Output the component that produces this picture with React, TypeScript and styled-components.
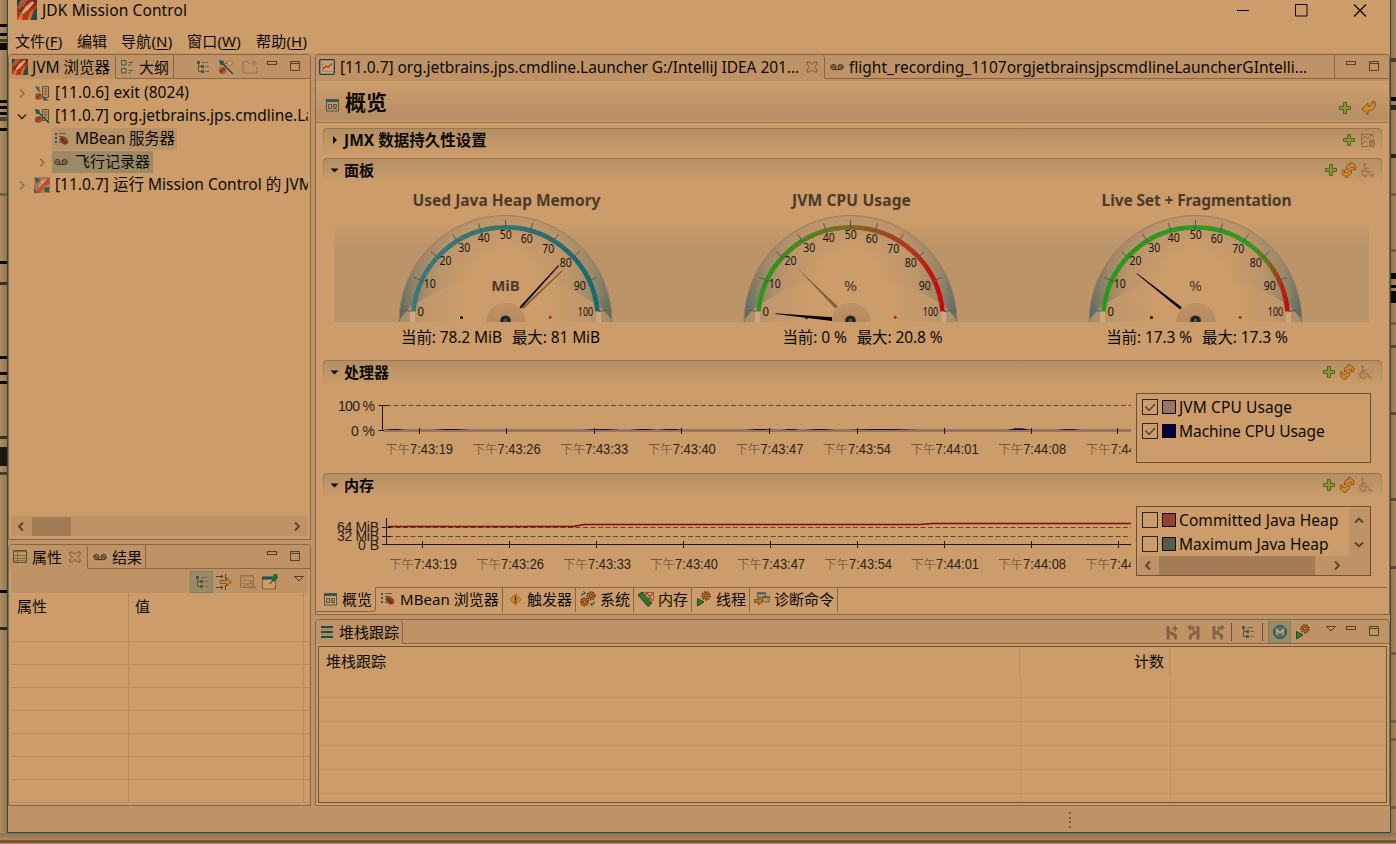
import React from 'react';
import styled, { createGlobalStyle, css } from 'styled-components';

const C = {
  light: '#cc9c6a',
  dark: '#c09366',
  line: '#876545',
  ink: '#0b0a08',
  mid: '#6a5138',
  grid: '#b78c60',
  teal: '#1d5050',
  header: '#b68f65',
  thumb: '#a37c55',
};

const GlobalStyle = createGlobalStyle`
  * { box-sizing: border-box; }
  html, body { margin: 0; padding: 0; overflow: hidden; }
  body {
    font-family: "Noto Sans", "Noto Sans CJK SC", sans-serif;
    font-size: 15px;
    line-height: 20px;
    color: ${C.ink};
    background: #ae8960;
  }
  svg { display: block; flex: none; }
`;

/* ---------- desktop ---------- */

const Desktop = styled.div`
  width: 1396px;
  height: 844px;
  display: flex;
  overflow: hidden;
  background: linear-gradient(180deg, #b08b61 0 833px, #8d6f4d 833px, #a98459 839px, #a98459 840px, #70563c 840px 843px, #b98e60 843px);
`;

const Sliver = styled.div<{ $w: number }>`
  width: ${p => p.$w}px;
  height: 833px;
  flex: none;
`;

const Window = styled.div`
  width: 1384px;
  height: 833px;
  flex: none;
  display: flex;
  flex-direction: column;
  border: 1px solid ${C.teal};
  border-top: 0;
  background: ${C.dark};
`;

const TitleBar = styled.div`
  height: 20px;
  display: flex;
  align-items: center;
  background: ${C.light};
  padding-left: 9px;
  gap: 5px;
`;

const WindowButtons = styled.div`
  margin-left: auto;
  display: flex;
  align-items: center;
  gap: 45px;
  padding-right: 22px;
`;

const Text = styled.span<{ $ls?: number }>`
  white-space: nowrap;
  letter-spacing: ${p => p.$ls ?? 0}px;
`;

const Latin = styled(Text)`
  font-size: 15.5px;
`;

const MenuBar = styled.div`
  height: 33px;
  padding: 9px 0 0 7px;
  display: flex;
  align-items: center;
  background: ${C.light};
`;

const MenuItem = styled.span<{ $w: number; $ls?: number }>`
  width: ${p => p.$w}px;
  white-space: nowrap;
  letter-spacing: ${p => p.$ls ?? 0.1}px;
  u { text-underline-offset: 2px; }
`;

const Workbench = styled.div`
  flex: 1;
  display: flex;
  gap: 4px;
  padding-top: 1px;
  background: ${C.dark};
`;

const Column = styled.div<{ $w: number }>`
  width: ${p => p.$w}px;
  display: flex;
  flex-direction: column;
  gap: 4px;
`;

const Pane = styled.section<{ $h: number; $fill?: string }>`
  height: ${p => p.$h}px;
  display: flex;
  flex-direction: column;
  border: 1px solid ${C.line};
  border-radius: 4px 4px 0 0;
  background: ${p => p.$fill ?? C.light};
  overflow: hidden;
`;

const TabRow = styled.div`
  height: 24px;
  flex: none;
  display: flex;
  background: ${C.dark};
`;

const Tab = styled.div<{ $w: number; $active?: boolean; $pl?: number; $gap?: number }>`
  width: ${p => p.$w}px;
  display: flex;
  align-items: center;
  gap: ${p => p.$gap ?? 5}px;
  padding-left: ${p => p.$pl ?? 4}px;
  border-right: 1px solid ${C.line};
  border-bottom: 1px solid ${p => (p.$active ? 'transparent' : C.line)};
  ${p => p.$active && css`border-top-right-radius: 4px;`}
`;

const TabTools = styled.div<{ $pr?: number }>`
  flex: 1;
  display: flex;
  justify-content: flex-end;
  align-items: center;
  padding-right: ${p => p.$pr ?? 9}px;
  border-bottom: 1px solid ${C.line};
`;

const Slot = styled.span<{ $ml?: number; $up?: number }>`
  display: flex;
  margin-left: ${p => p.$ml ?? 0}px;
  margin-bottom: ${p => p.$up ?? 0}px;
`;

/* ---------- tree ---------- */

const Tree = styled.div`
  flex: 1;
  padding: 2px 2px 0 0;
  overflow: hidden;
`;

const TreeRow = styled.div<{ $depth?: number }>`
  height: 23px;
  display: flex;
  align-items: center;
  padding-left: ${p => 8 + (p.$depth ?? 0) * 20}px;
  overflow: hidden;
`;

const Twisty = styled.span`
  width: 10px;
  height: 10px;
  flex: none;
`;

const TreeLabel = styled.span<{ $bg?: string; $w?: number }>`
  height: 22px;
  flex: none;
  display: flex;
  align-items: center;
  gap: 5px;
  margin-left: 5px;
  padding-left: 2px;
  width: ${p => (p.$w ? p.$w + 'px' : 'auto')};
  background: ${p => p.$bg ?? 'transparent'};
  ${Text} { padding-bottom: 2px; }
`;

const HScroll = styled.div`
  height: 20px;
  margin: 0 2px 3px;
  display: flex;
  align-items: center;
  background: ${C.dark};
`;

const Thumb = styled.div<{ $w: number; $h: number }>`
  width: ${p => p.$w}px;
  height: ${p => p.$h}px;
  background: ${C.thumb};
`;

const Push = styled.span`
  margin-left: auto;
`;

/* ---------- property table ---------- */

const PropTools = styled.div`
  height: 24px;
  margin: 0 2px;
  padding: 2px 4px 0 0;
  display: flex;
  align-items: center;
  justify-content: flex-end;
  background: ${C.dark};
`;

const ToggleButton = styled.span`
  width: 23px;
  height: 22px;
  display: flex;
  align-items: center;
  justify-content: center;
  background: #9b8a66;
  border: 1px solid #728671;
`;

const PropTable = styled.div`
  margin: 0 2px;
  display: grid;
  grid-template-columns: 118px 175px 4px;
  grid-template-rows: 26px repeat(8, 23px);
`;

const PropCell = styled.div<{ $head?: boolean; $last?: boolean }>`
  border-right: ${p => (p.$last ? 0 : 1)}px solid ${C.grid};
  border-bottom: ${p => (p.$head ? 0 : 1)}px solid ${C.grid};
  padding: 3px 0 0 6px;
`;

/* ---------- editor ---------- */

const FormHeader = styled.div`
  height: 44px;
  flex: none;
  border-top: 2px solid ${C.dark};
  border-bottom: 1px solid #94764f;
  margin-right: 1px;
  padding: 2px 11px 0 10px;
  display: flex;
  align-items: center;
  background: linear-gradient(180deg, ${C.light} 0, ${C.light} 4px, ${C.header} 92%, #c2966a 98%);
`;

const FormTitle = styled.h1`
  margin: 0 0 1px 6px;
  font-size: 21px;
  line-height: 28px;
  font-weight: 700;
`;

const FormBody = styled.div`
  flex: 1;
  padding: 5px 7px 0 7px;
  display: flex;
  flex-direction: column;
  gap: 6px;
`;

const Section = styled.div<{ $h: number }>`
  height: ${p => p.$h}px;
  flex: none;
`;

const SectionHead = styled.div<{ $pr?: number }>`
  height: 25px;
  display: flex;
  align-items: center;
  gap: 2px;
  padding: 0 ${p => p.$pr ?? 8}px 2px 5px;
  border: 1px solid transparent;
  border-top-color: #957852;
  border-bottom: 0;
  border-radius: 4px 4px 0 0;
  background:
    linear-gradient(180deg, ${C.header}, ${C.light}) padding-box,
    linear-gradient(180deg, #957852, ${C.light}) border-box;
`;

const SectionTitle = styled.h2<{ $size?: number }>`
  margin: 0 auto 0 2px;
  font-size: ${p => p.$size ?? 15}px;
  line-height: 20px;
  font-weight: 700;
`;

const GaugeRow = styled.div`
  display: flex;
  width: 1035px;
  margin-left: 11px;
`;

const GaugeCell = styled.div`
  width: 345px;
  display: flex;
  flex-direction: column;
  align-items: center;
`;

const GaugeTitle = styled.div<{ $ls?: number }>`
  height: 31px;
  padding-top: 7px;
  font-size: 15.5px;
  font-weight: 700;
  color: #4b3a2a;
  letter-spacing: ${p => p.$ls ?? 0}px;
  white-space: nowrap;
`;

const GaugeValue = styled.div<{ $dx: number }>`
  display: flex;
  gap: 10px;
  padding-top: 5px;
  font-size: 15.5px;
  letter-spacing: -0.1px;
  white-space: nowrap;
  margin-left: ${p => p.$dx}px;
`;

const ChartRow = styled.div`
  display: flex;
  gap: 5px;
  padding-left: 7px;
`;

const Legend = styled.div`
  width: 235px;
  height: 70px;
  margin-top: 8px;
  border: 1px solid ${C.mid};
  display: grid;
  grid-template-columns: 212px 21px;
  grid-template-rows: 48px 19px;
  padding-top: 1px;
`;

const LegendItems = styled.div`
  padding-left: 5px;
  overflow: hidden;
`;

const LegendItem = styled.div`
  height: 24px;
  display: flex;
  align-items: center;
  white-space: nowrap;
`;

const CheckBox = styled.span`
  width: 16px;
  height: 16px;
  flex: none;
  margin-right: 4px;
  border: 1px solid #30251a;
`;

const Swatch = styled.span<{ $c: string }>`
  width: 14px;
  height: 14px;
  flex: none;
  margin-right: 3px;
  border: 1px solid #100c08;
  background: ${p => p.$c};
`;

const VBar = styled.div`
  display: flex;
  flex-direction: column;
  align-items: center;
  justify-content: space-between;
  padding: 7px 1px 6px 0;
  background: ${C.dark};
`;

const HBar = styled.div`
  grid-column: 1 / 3;
  display: flex;
  align-items: center;
  margin: 0 0 0 1px;
  background: ${C.dark};
`;

const PageTabs = styled.div`
  height: 27px;
  flex: none;
  display: flex;
  margin-right: 2px;
`;

const PageTab = styled.div<{ $w: number; $pl?: number; $gap?: number; $active?: boolean }>`
  width: ${p => p.$w}px;
  height: 25px;
  display: flex;
  align-items: center;
  gap: ${p => p.$gap ?? 4}px;
  padding: 0 0 ${p => (p.$active ? 1 : 2)}px ${p => p.$pl ?? 5}px;
  border-right: 1px solid ${C.line};
  border-top: 1px solid ${p => (p.$active ? 'transparent' : C.line)};
  ${p => p.$active && css`
    border-bottom: 1px solid ${C.line};
    border-bottom-right-radius: 4px;
  `}
`;

const PageTabRest = styled.div`
  flex: 1;
  border-top: 1px solid ${C.line};
`;

/* ---------- stack trace ---------- */

const StackTable = styled.div`
  flex: 1;
  margin: 2px 2px 2px 2px;
  border: 1px solid ${C.mid};
  background: ${C.light};
  overflow: hidden;
`;

const StackGrid = styled.div<{ $head?: boolean }>`
  display: grid;
  grid-template-columns: ${p => (p.$head ? '701px 150px 1fr' : '702px 150px 1fr')};
  height: ${p => (p.$head ? 27 : 24)}px;
  padding-top: ${p => (p.$head ? 1 : 0)}px;
`;

const StackCell = styled.div<{ $right?: boolean; $head?: boolean; $last?: boolean }>`
  padding: 3px 5px 0 7px;
  text-align: ${p => (p.$right ? 'right' : 'left')};
  border-right: ${p => (p.$last ? 0 : 1)}px solid ${p => (p.$head ? '#b38a5f' : '#c09465')};
  border-bottom: ${p => (p.$head ? 0 : 1)}px solid #c09465;
`;

const Divider = styled.span<{ $ml: number }>`
  width: 1px;
  height: 18px;
  margin-left: ${p => p.$ml}px;
  background: ${C.mid};
`;

const StatusBar = styled.div`
  height: 26px;
  padding: 6px 0 0 1061px;
`;

const Grip = styled.div`
  width: 2px;
  height: 17px;
  background: repeating-linear-gradient(180deg, #7d6042 0 2px, transparent 2px 4.6px);
`;

/* ---------- icons ---------- */

const Svg = ({ w = 16, h = 16, children }: { w?: number; h?: number; children: React.ReactNode }) => (
  <svg width={w} height={h} viewBox={`0 0 ${w} ${h}`} fill="none">{children}</svg>
);

const LogoIcon = ({ size = 16 }: { size?: number }) => (
  <svg width={size} height={size} viewBox="0 0 16 16">
    <rect width="16" height="16" fill="#8e2c18" />
    <path d="M0 0H6L4 5L0 8Z" fill="#1f3f48" />
    <path d="M3 0H9L5 5L1 8L0 6Z" fill="#a8593a" />
    <path d="M16 0V4L11 7L13 0Z" fill="#6f2a1c" />
    <path d="M12 1L14 2L9 8L4 12L3 11L7 5Z" fill="#d6a27a" />
    <path d="M16 3V7L10 10L7 16H3L6 11L11 7Z" fill="#b83616" />
    <path d="M14 7L10 10L8 16H11Z" fill="#d0682a" />
    <path d="M16 6V16H11L13 10Z" fill="#244a52" />
    <path d="M0 9L4 10L2 16H0Z" fill="#a33a1c" />
    <path d="M0 16L3 11L5 12L4 16Z" fill="#cf7434" />
  </svg>
);

const ConnectedLogoIcon = () => (
  <Svg>
    <rect width="16" height="16" fill="#b5714f" />
    <path d="M16 1V7L9 11L6 16H2L6 9L12 3Z" fill="#b95233" />
    <path d="M13 1L8 8L4 11L7 4Z" fill="#d2a07a" />
    <path d="M15 7L10 10L8 16H12Z" fill="#cb7646" />
    <path d="M1 1l5 1-1 3-3 1z" fill="#2c5f63" />
    <path d="M4 4l8 8" stroke="#83705a" />
    <path d="M10 11l5-1v5h-4z" fill="#2b5960" />
    <path d="M0 11l4 5H0z" fill="#47615c" />
  </Svg>
);

const OutlineIcon = () => (
  <Svg w={14}>
    <path d="M1.500 1.500h4.500v4.500h-4.500zM1.500 9.500h4.500v4.500h-4.500z" stroke="#2b5a62" />
    <path d="M9 3.500h4M9 11.500h4" stroke="#2b5a62" />
    <path d="M8 6h3M8 14h3" stroke="#5b5a40" />
  </Svg>
);

const TreeIcon = () => (
  <Svg w={14}>
    <path d="M2.500 3v9.500h3M2.500 7.500h3" stroke="#5d553c" />
    <path d="M1 2h3v3h-3zM5 6h3v3h-3zM5 11h3v3h-3z" fill="#47594f" />
    <path d="M6 3.500h6M9 7.500h4M9 12.500h4" stroke="#7a6240" />
  </Svg>
);

const Plug = () => (
  <>
    <path d="M1 1l5 1-1 4-3 0z" fill="#2c5f63" />
    <path d="M4 4L15 15" stroke="#1f5358" strokeWidth="1.600" />
    <path d="M1.500 1.500l4 4" stroke="#123e44" />
    <circle cx="4.500" cy="11.500" r="3.600" fill="#a2512a" />
    <path d="M2 13q2-1 4.500-4" stroke="#542611" />
  </>
);

const Spark = ({ x, y, c = '#b0711f' }: { x: number; y: number; c?: string }) => (
  <path d={`M${x} ${y - 4}v8M${x - 4} ${y}h8M${x - 2.5} ${y - 2.5}l5 5M${x + 2.5} ${y - 2.5}l-5 5`} stroke={c} strokeWidth="1" />
);

const NewConnectionIcon = () => (
  <Svg>
    <Plug />
    <path d="M6 6l3-3" stroke="#1f5358" />
    <Spark x={12} y={4} />
    <circle cx="12" cy="4" r="1.600" fill="#dcae70" />
  </Svg>
);

const NewFolderIcon = () => (
  <Svg>
    <path d="M8 4.500H7L5.500 2.500h-3.500q-1 0-1 1V13q0 1 1 1h12q1 0 1-1V8" stroke="#8f7049" />
    <path d="M12 .5v7M8.500 4h7M10 2l4 4M14 2l-4 4" stroke="#97774f" strokeWidth=".8" />
  </Svg>
);

const JvmIcon = ({ on }: { on?: boolean }) => (
  <Svg>
    <path d="M8.500 1.500h6v11h-6z" stroke="#5c4f38" fill="#bd9364" />
    <path d="M10 4h3M10 6.500h3M10 9h3" stroke="#5c4f38" />
    {on ? <Plug /> : (
      <>
        <path d="M1 1l5 1.500-2 3.500z" fill="#2c5f63" />
        <path d="M4 4l2 3" stroke="#123e44" />
        <circle cx="4.500" cy="11.500" r="3.400" fill="#a2512a" />
        <path d="M2 13q2-1 4.500-4" stroke="#542611" />
        <path d="M9 11l6 4.500-6 0z" fill="#2c5f63" />
      </>
    )}
  </Svg>
);

const BeanIcon = () => (
  <Svg>
    <path d="M1 2h2v2h-2zM1 6h2v2h-2zM1 10h2v2h-2z" fill="#2f5658" />
    <path d="M5 2.500h7M5 5.500h4M5 8.500h2M5 11.500h2" stroke="#4c5f52" />
    <ellipse cx="10" cy="9.500" rx="4.800" ry="3.600" transform="rotate(40 10 9.500)" fill="#8a4526" />
    <path d="M7.500 7q1.500 4 5 5" stroke="#3f1c0d" />
  </Svg>
);

const RecorderIcon = () => (
  <Svg w={14}>
    <path d="M3.500 10.600h7" stroke="#3d3022" />
    <circle cx="3.400" cy="8" r="2.600" fill="#9a784f" stroke="#3d3022" />
    <circle cx="10.600" cy="8" r="2.600" fill="#9a784f" stroke="#3d3022" />
    <path d="M2 7l2.600 2M9.400 7l2.600 2" stroke="#3d3022" />
  </Svg>
);

const FormIcon = () => (
  <Svg w={13} h={13}>
    <rect x=".5" y=".5" width="12" height="11.500" stroke="#4b5a4d" />
    <path d="M0 2h13" stroke="#2e5354" strokeWidth="2" />
    <path d="M2.500 5.500h3v4h-3zM7.500 5.500h3v2.500h-3z" stroke="#4f5440" />
    <path d="M7 9.500h4" stroke="#4f5440" />
  </Svg>
);

const MinIcon = () => <Svg w={11} h={11}><rect x=".5" y=".5" width="9" height="3" stroke="#54412c" /></Svg>;
const MaxIcon = () => <Svg w={11} h={11}><path d="M.5 .5h9v9h-9zM.5 2.500h9" stroke="#54412c" /></Svg>;
const MenuTriangle = () => <Svg w={10} h={6}><path d="M.5 .5h9L5 5z" stroke="#54412c" /></Svg>;

const CloseTabIcon = () => (
  <Svg w={12} h={12}>
    <path d="M1 1h2.500L6 3.500 8.500 1H11v2.500L8.500 6 11 8.500V11H8.500L6 8.500 3.500 11H1V8.500L3.500 6 1 3.500z" stroke="#6a5138" strokeWidth=".9" />
  </Svg>
);

const PlusIcon = () => (
  <Svg><path d="M6.500 2.500h3v4h4v3h-4v4h-3v-4h-4v-3h4z" fill="#96902e" stroke="#3f6a2c" /></Svg>
);

const BackIcon = () => (
  <Svg><path d="M1 9L7 3v3.500q4 0 4-4.500l3-.5q2 8.500-7 9.500v3.500z" fill="#d08a30" stroke="#8e4f16" /></Svg>
);

const ChartTrashIcon = () => (
  <Svg>
    <path d="M1.500 1v13.500H9M2 2.500h12" stroke="#917049" />
    <path d="M2 8l3-4 3 3 3-4 3 2M2 12l3-3 3 2" stroke="#8b6b46" />
    <rect x="9.500" y="7.500" width="5" height="7.500" rx="2" fill="#b1885c" stroke="#8b6b46" />
    <path d="M9.500 9.500h5M11.500 10v4" stroke="#8b6b46" />
  </Svg>
);

const RefreshIcon = () => (
  <Svg>
    <path d="M5.500 8V5Q6 2.500 9.500 2.500L9 .7L11 .5L15 4L14.500 8H12L13 5.500Q9.500 4.500 8.500 6.500z" fill="#d08a30" stroke="#8e4f16" strokeWidth=".9" />
    <path d="M10.500 8V11Q10 13.500 6.500 13.500L7 15.300L5 15.500L1 12L1.500 8H4L3 10.500Q6.500 11.500 7.500 9.500z" fill="#d08a30" stroke="#8e4f16" strokeWidth=".9" />
  </Svg>
);

const AccessIcon = () => (
  <Svg>
    <rect width="16" height="16" fill="#bf9265" />
    <circle cx="5.500" cy="2.500" r="1.500" fill="#997750" />
    <path d="M5.500 4.500v5h5l2 4h2M6 6.500h4" stroke="#997750" strokeWidth="1.300" />
    <path d="M4.500 7.500a3.500 3.500 0 1 0 5 4.500" stroke="#997750" strokeWidth="1.300" />
  </Svg>
);

const TableIcon = ({ dim }: { dim?: boolean }) => (
  <Svg w={dim ? 16 : 14}>
    <path d="M.5 1.500h13v12h-13z" stroke={dim ? '#92724a' : '#54533c'} />
    <path d="M0 2.500h14M4.500 3v10M1 6.500h12M1 9.500h12M1 11.500h12" stroke={dim ? '#a17c53' : '#6b6244'} strokeWidth=".8" />
    {dim && <path d="M7 11l4-4v2.500q4 0 4 5.500-1-3-4-2.500v2.500z" fill="#b58b5e" stroke="#8f6f48" />}
  </Svg>
);

const FilterIcon = () => (
  <Svg>
    <path d="M0 2.500h6M0 13.500h6M9.500 0v5M9.500 11v5" stroke="#46452f" />
    <path d="M5 .5L7.500 2.500 5 4.500zM5 11.500L7.500 13.500l-2.500 2z" fill="#46452f" />
    <path d="M4.500 6.500h6v-2.500l5 4-5 4v-2.500h-6z" fill="#c6873c" stroke="#8e4f16" />
  </Svg>
);

const PinIcon = () => (
  <Svg>
    <path d="M.5 3.500h13v11.500h-13z" stroke="#8a5c2c" fill="#c99c68" />
    <path d="M0 4h10" stroke="#1f4c5c" strokeWidth="3" />
    <path d="M12 0h3l1 4-4 4-3-3z" fill="#236b2a" />
    <path d="M11 6l-3 4" stroke="#1f3a24" />
  </Svg>
);

const WarnIcon = () => (
  <Svg w={13} h={13}>
    <path d="M6.500 .8L12.200 6.500L6.500 12.200L.8 6.500z" fill="#c88536" stroke="#a8652a" />
    <path d="M6.500 3.500v4M6.500 8.500v1.500" stroke="#331c08" strokeWidth="1.400" />
  </Svg>
);

const Gear = ({ x, y, r }: { x: number; y: number; r: number }) => (
  <>
    <circle cx={x} cy={y} r={r} fill="#b9752b" />
    <circle cx={x} cy={y} r={r} stroke="#6d3410" strokeWidth="1.800" strokeDasharray="1.600 1" />
    <circle cx={x} cy={y} r={r * 0.4} fill="#c99662" stroke="#5a2a0c" strokeWidth=".9" />
  </>
);

const GearsIcon = () => (
  <Svg>
    <Gear x={11} y={4.800} r={3.700} /><Gear x={4.500} y={10.800} r={3.700} />
    <path d="M1.500 5q0-3 3.500-3M3.500 .5l2 1.500L3.500 3.500M14.500 10.500q0 3-3.500 3M12.500 12l-2 1.500 2 1.500" stroke="#1d4b52" />
  </Svg>
);

const RunGearIcon = () => (
  <Svg w={15}>
    <Gear x={10} y={4.800} r={3.800} />
    <path d="M1.500 7.500v7.500L8 11z" fill="#2f7a2e" stroke="#1d4f24" />
  </Svg>
);

const MemoryIcon = () => (
  <Svg>
    <path d="M5 1.500h10.500v8" stroke="#856640" />
    <path d="M7 4l2-2 3 4 3-4M9 8l3-1 3 3" stroke="#a31c16" />
    <path d="M0 4L4 1L14 12L10 15.500z" fill="#2c6d2e" stroke="#1d4a22" />
    <path d="M3 4l7 8M5.500 3.500l6.500 7" stroke="#76853a" strokeDasharray="1.500 1" />
  </Svg>
);

const DiagIcon = () => (
  <Svg>
    <path d="M3.500 1.500h8v5h-8zM8.500 5.500h7v5.500h-7z" fill="#b58f64" stroke="#6d6550" />
    <path d="M3 2.500h9M8 6.500h8" stroke="#4b5754" />
    <path d="M.5 8.500h4V6l4.500 4-4.500 4v-2.500h-4z" fill="#b9782b" stroke="#7b4a17" />
  </Svg>
);

const LinesIcon = () => (
  <Svg w={12} h={12}>
    <path d="M0 1h12M0 6h12M0 11h12" stroke="#1d4b54" strokeWidth="1.800" />
    <path d="M0 3.300h12M0 8.300h12" stroke="#8f8259" />
  </Svg>
);

const BranchIcon = ({ kind }: { kind: 'new' | 'left' | 'right' }) => (
  <Svg w={13} h={16}>
    {kind === 'left'
      ? <path d="M11 2v13.500M10.500 7.500L3.500 11.500V15.500" stroke="#836545" strokeWidth="3" />
      : <path d="M2 2v13.500M2.500 7.500L9.500 11.500V15.500" stroke="#836545" strokeWidth="3" />}
    {kind === 'new' && <path d="M9 0L10 3.500L13 4.500L10 5.500L9 9L8 5.500L5 4.500L8 3.500z" fill="#836545" />}
    {kind === 'left' && <path d="M0 3.500L4 .5v2h3.500v5l-2 1V5H4v2z" fill="#836545" />}
    {kind === 'right' && <path d="M13 3.500L9 .5v2H5.500v5l2 1V5H9v2z" fill="#836545" />}
  </Svg>
);

const MethodIcon = () => (
  <Svg w={14} h={14}>
    <circle cx="7" cy="7" r="6.500" fill="#47716a" stroke="#284f4e" />
    <path d="M4 10V4.500L7 8l3-3.500V10" stroke="#c8a67a" strokeWidth="1.500" />
  </Svg>
);

const LiveChartIcon = () => (
  <Svg>
    <rect x=".7" y=".7" width="14.600" height="14.600" rx="1" fill="#c7a173" stroke="#1e3f48" strokeWidth="1.300" />
    <path d="M3.500 3v9.500H13" stroke="#7e6a4c" strokeDasharray="1 1" />
    <path d="M4 10l3-3 2 1.500 4-4" stroke="#b5301c" strokeWidth="1.200" />
  </Svg>
);

type Dir = 'up' | 'down' | 'left' | 'right';
const chevrons: Record<Dir, string> = {
  right: 'M3 1.500l4 4-4 4',
  left: 'M7 1.500l-4 4 4 4',
  down: 'M1 3.500l4 4 4-4',
  up: 'M1 7.500l4-4 4 4',
};
const Chevron = ({ dir, c = '#54422e', sw = 1.8 }: { dir: Dir; c?: string; sw?: number }) => (
  <Svg w={11} h={11}><path d={chevrons[dir]} stroke={c} strokeWidth={sw} /></Svg>
);

const SectionArrow = ({ open }: { open?: boolean }) => (
  <Svg w={11} h={10}><path d={open ? 'M1.500 3.500h8L5.500 7.500z' : 'M4 1l4 4-4 4z'} fill={C.ink} /></Svg>
);

/* ---------- gauges ---------- */

const ticks = [
  [-100.6, 310.3, -94.6, 311.3], [-91.7, 277.3, -81.3, 281.7], [-74.7, 251.3, -66.5, 258.6],
  [-53, 234.3, -47, 242.7], [-27, 223.3, -24.7, 230.7], [0, 220, 0, 230], [27, 223.3, 24.7, 231.7],
  [53, 234.3, 47, 242.7], [74, 251.3, 67.7, 257.3], [91.3, 277.3, 81.7, 281.7], [100.3, 310.3, 93, 311.7],
];
const marks = [
  [-84.7, 311.7], [-75.7, 283.7], [-60, 261.3], [-41.3, 247.7], [-21.7, 238.3], [0.3, 235],
  [21.3, 239], [42.7, 249], [60.3, 263.3], [74.3, 285.7], [80, 311.7],
];

type GaugeProps = {
  id: string;
  unit: string;
  boldUnit?: boolean;
  stops: [number, string][];
  needle: string;
  shadow?: string;
};

const Gauge = ({ id, unit, boldUnit, stops, needle, shadow }: GaugeProps) => (
  <svg width="345" height="108" viewBox="-171.500 214 345 108">
    <defs>
      <linearGradient id={id + 'band'} x1="0" y1="0" x2="0" y2="1">
        <stop offset="0.080" stopColor="#bb9469" stopOpacity="0" />
        <stop offset="0.300" stopColor="#bb9469" />
        <stop offset="1" stopColor="#bb9469" />
      </linearGradient>
      <linearGradient id={id + 'arc'} gradientUnits="userSpaceOnUse" x1="-92" y1="0" x2="92" y2="0">
        {stops.map(([o, c]) => <stop key={o} offset={o} stopColor={c} />)}
      </linearGradient>
      <radialGradient id={id + 'dial'} gradientUnits="userSpaceOnUse" cx="0" cy="284" r="112">
        <stop offset="0.300" stopColor="#cc9c6a" />
        <stop offset="0.600" stopColor="#bd956a" />
        <stop offset="0.800" stopColor="#998568" />
        <stop offset="1" stopColor="#4d6863" />
      </radialGradient>
      <radialGradient id={id + 'inner'} gradientUnits="userSpaceOnUse" cx="0" cy="300" r="106">
        <stop offset="0.400" stopColor="#cc9c6a" />
        <stop offset="0.800" stopColor="#c0976b" />
        <stop offset="1" stopColor="#a58c6b" />
      </radialGradient>
      <linearGradient id={id + 'hub'} x1="0" y1="0" x2="0" y2="1">
        <stop offset="0" stopColor="#bf9265" />
        <stop offset="1" stopColor="#ad845c" />
      </linearGradient>
    </defs>
    <rect x="-172" y="214" width="346" height="108" fill={`url(#${id}band)`} />
    <path d="M-106.500 322A106.500 106.500 0 0 1 106.500 322z" fill={`url(#${id}dial)`} stroke="#a17c58" strokeWidth="1" />
    <path d="M-106 322L-105 318L-94 306Q-62 286 -36 280Q0 272 36 280Q62 286 94 306L105 318L106 322z" fill={`url(#${id}inner)`} />
    <path d="M-95.500 312h5v10h-5zM90.500 312h5v10h-5z" fill="#cfa67c" />
    <path d="M-92 311.200A92.400 92.400 0 0 1 92 311.200" fill="none" stroke={`url(#${id}arc)`} strokeWidth="4.600" />
    {ticks.map((t, i) => <line key={i} x1={t[0]} y1={t[1]} x2={t[2]} y2={t[3]} stroke="#4f5a55" strokeWidth="1" />)}
    {marks.map(([x, y], i) => (
      <text key={i} x={x} y={y + 4} textAnchor="middle" fontSize="13" fill="#15110c"
        textLength={i === 0 ? 6.5 : i === 10 ? 15.5 : 12} lengthAdjust="spacingAndGlyphs">{i * 10}</text>
    ))}
    <text x="0" y="291" textAnchor="middle" fontSize="15" fontWeight={boldUnit ? 700 : 400} fill="#4b3a2a"
      textLength={boldUnit ? 28.500 : 13} lengthAdjust="spacingAndGlyphs">{unit}</text>
    <circle cx="0.500" cy="322.500" r="19.800" fill={`url(#${id}hub)`} />
    {shadow && <path d={shadow} fill="#80603f" />}
    <path d={needle} fill="#050403" />
    <circle cx="-44" cy="317.400" r="1.500" fill="#100c08" />
    <circle cx="44.700" cy="317.400" r="1.400" fill="#bd1512" />
    <circle cx="0" cy="320.800" r="5.600" fill="#4b4034" />
    <circle cx="0" cy="320.500" r="3.200" fill="#38505a" stroke="#14110d" strokeWidth="1.600" />
  </svg>
);

/* ---------- charts ---------- */

const times = ['19', '26', '33', '40', '47', '54', '01', '08', '15'];
const clock = (s: string, i: number) => `7:${i > 5 ? '44' : '43'}:${s}`;

const TimeLabels = ({ x0, pitch, y }: { x0: number; pitch: number; y: number }) => (
  <g fontFamily='"Liberation Sans", "Noto Sans CJK SC", sans-serif' fontSize="14" fill="#2b2118">
    {times.map((s, i) => (
      <g key={s}>
        <text x={x0 + i * pitch} y={y} fontSize="12.500" fontWeight="300" fill="#5c4731">下午</text>
        <text x={x0 + i * pitch + 25} y={y} textLength="43" lengthAdjust="spacingAndGlyphs">{clock(s, i)}</text>
      </g>
    ))}
  </g>
);

const cpuBumps = [
  [384, 406], [432, 470], [582, 620], [630, 657], [657, 684], [745, 775], [782, 800], [805, 835], [845, 920], [1007, 1031], [1057, 1081],
];

const CpuChart = () => (
  <svg width="801" height="78" viewBox="330 385 801 78">
    <g fontFamily='"Liberation Sans", sans-serif' fontSize="14" fill="#2b2118">
      <text x="338" y="411" textLength="37" lengthAdjust="spacing">100 %</text>
      <text x="351" y="436" textLength="24" lengthAdjust="spacing">0 %</text>
    </g>
    <path d="M386 405.500H1131" stroke="#5f4832" strokeDasharray="5 2.500" />
    <path d="M384 430.500H1131" stroke="#9a7462" strokeWidth="3" />
    <path d="M382.500 405V431M378.500 405.500H388M378.500 430.500H384" stroke="#1f170f" />
    {cpuBumps.map(([a, b]) => (
      <path key={a} d={`M${a} 430L${a + (b - a) * 0.35} ${a === 1007 ? 428.3 : 429}H${b - (b - a) * 0.35}L${b} 430`} fill="#14104c" />
    ))}
    {[419.500, 506.500, 594.500, 681.500, 769.500, 857.500, 944.500, 1031.500, 1117.500].map(x => (
      <path key={x} d={`M${x} 428V434`} stroke="#1f170f" />
    ))}
    <TimeLabels x0={385} pitch={87.600} y={454} />
  </svg>
);

const MemChart = () => (
  <svg width="801" height="88" viewBox="330 498 801 88">
    <g fontFamily='"Liberation Sans", sans-serif' fontSize="14" fill="#2b2118">
      <text x="337" y="532" textLength="42" lengthAdjust="spacing">64 MiB</text>
      <text x="337" y="541" textLength="42" lengthAdjust="spacing">32 MiB</text>
      <text x="358" y="550" textLength="21" lengthAdjust="spacing">0 B</text>
    </g>
    <path d="M388 527.500H1131M388 536.500H1131" stroke="#5f4832" strokeDasharray="5 2.500" />
    <path d="M386.500 518V545M382 527.500H391M382 536.500H391M382 544.500H1131" stroke="#1f170f" />
    <path d="M388 526.500H573L584 524.500H920L933 523.500H1131" stroke="#7d0a0d" strokeWidth="1.300" fill="none" />
    {times.map((s, i) => <path key={s} d={`M${Math.round(422 + i * 87) + 0.5} 541V548`} stroke="#1f170f" />)}
    <TimeLabels x0={389} pitch={87} y={569} />
  </svg>
);

const SectionBar = ({ title, open, pr, size, children }: { title: string; open?: boolean; pr?: number; size?: number; children: React.ReactNode }) => (
  <SectionHead $pr={pr}>
    <SectionArrow open={open} />
    <SectionTitle $size={size}>{title}</SectionTitle>
    {children}
  </SectionHead>
);

const LegendRow = ({ color, label, checked, ls }: { color: string; label: string; checked?: boolean; ls?: number }) => (
  <LegendItem>
    <CheckBox>
      {checked && <Svg w={14} h={14}><path d="M2.500 6.500l3.500 4L12 4" stroke="#54422e" strokeWidth="1.500" /></Svg>}
    </CheckBox>
    <Swatch $c={color} />
    <Latin $ls={ls}>{label}</Latin>
  </LegendItem>
);

const ink = '#0a0907';
const band = (ys: [number, number, string?][]) =>
  `linear-gradient(180deg, ${ys.map(([a, b, c]) => `transparent ${a}px, ${c ?? ink} ${a}px ${b}px, transparent ${b}px`).join(', ')})`;

const LeftSliver = styled(Sliver)`
  background: ${band([[24, 27], [33, 36], [39, 42, '#4a3a28'], [43, 50], [100, 103], [106, 109], [112, 115], [117, 121, '#4e4130'], [128, 131], [193, 196, '#765c41'], [261, 264], [282, 285, '#3b3021'], [356, 359], [372, 375], [381, 384], [436, 439, '#3b3021'], [447, 466, '#1c1811'], [472, 475, '#4a3a28'], [590, 593], [627, 630, '#2b241a']])},
    linear-gradient(90deg, #b28c62, #96764f);
`;

const RightSliver = styled(Sliver)`
  background: ${band([[58, 62, '#4a3a28'], [97, 101, ink], [105, 110, '#2b241a'], [154, 158, '#2b241a'], [193, 196, '#765c41'], [249, 252, '#765c41'], [273, 279], [285, 288], [291, 303], [322, 325, '#765c41'], [345, 348, '#5d4833'], [412, 415, '#5d4833'], [498, 501, '#5d4833'], [566, 569, '#5d4833'], [652, 655, '#765c41'], [720, 723, '#765c41'], [738, 741, '#765c41'], [806, 809, '#765c41']])},
    linear-gradient(90deg, #96764f, #ab865d);
`;

export default function App() {
  return (
    <>
      <GlobalStyle />
      <Desktop>
        <LeftSliver $w={7} />
        <Window>
          <TitleBar>
            <LogoIcon size={20} />
            <Latin $ls={0.12}>JDK Mission Control</Latin>
            <WindowButtons>
              <Svg w={13} h={13}><path d="M0 6.500h12" stroke={ink} /></Svg>
              <Svg w={13} h={13}><path d="M.5 .5h11.500v11.500h-11.500z" stroke={ink} /></Svg>
              <Svg w={15} h={13}><path d="M1 .5l12 12M13 .5l-12 12" stroke={ink} strokeWidth="1.200" /></Svg>
            </WindowButtons>
          </TitleBar>
          <MenuBar>
            <MenuItem $w={62}>文件(<u>F</u>)</MenuItem>
            <MenuItem $w={44}>编辑</MenuItem>
            <MenuItem $w={66} $ls={0.2}>导航(<u>N</u>)</MenuItem>
            <MenuItem $w={69} $ls={0.2}>窗口(<u>W</u>)</MenuItem>
            <MenuItem $w={60} $ls={0.2}>帮助(<u>H</u>)</MenuItem>
          </MenuBar>
          <Workbench>
            <Column $w={303}>
              <Pane $h={486}>
                <TabRow>
                  <Tab $w={107} $active $pl={3} $gap={4}>
                    <LogoIcon />
                    <Latin>JVM 浏览器</Latin>
                  </Tab>
                  <Tab $w={58} $pl={4}>
                    <OutlineIcon />
                    <Text>大纲</Text>
                  </Tab>
                  <TabTools>
                    <Slot><TreeIcon /></Slot>
                    <Slot $ml={8}><NewConnectionIcon /></Slot>
                    <Slot $ml={8}><NewFolderIcon /></Slot>
                    <Slot $ml={9}><MinIcon /></Slot>
                    <Slot $ml={12}><MaxIcon /></Slot>
                  </TabTools>
                </TabRow>
                <Tree>
                  <TreeRow>
                    <Twisty><Chevron dir="right" c="#8b6b49" sw={1.3} /></Twisty>
                    <TreeLabel><JvmIcon /><Latin $ls={0.05}>[11.0.6] exit (8024)</Latin></TreeLabel>
                  </TreeRow>
                  <TreeRow>
                    <Twisty><Chevron dir="down" c="#2b2118" sw={1.4} /></Twisty>
                    <TreeLabel><JvmIcon on /><Latin $ls={0}>[11.0.7] org.jetbrains.jps.cmdline.Launcher</Latin></TreeLabel>
                  </TreeRow>
                  <TreeRow $depth={1}>
                    <Twisty />
                    <TreeLabel $bg="#b89368" $w={125}><BeanIcon /><Latin $ls={-0.2}>MBean 服务器</Latin></TreeLabel>
                  </TreeRow>
                  <TreeRow $depth={1}>
                    <Twisty><Chevron dir="right" c="#8b6b49" sw={1.3} /></Twisty>
                    <TreeLabel $bg="#9c8a67" $w={101}>
                      <Slot><RecorderIcon /></Slot><Slot $ml={2}><Text>飞行记录器</Text></Slot>
                    </TreeLabel>
                  </TreeRow>
                  <TreeRow>
                    <Twisty><Chevron dir="right" c="#8b6b49" sw={1.3} /></Twisty>
                    <TreeLabel><ConnectedLogoIcon /><Latin>[11.0.7] 运行 Mission Control 的 JVM</Latin></TreeLabel>
                  </TreeRow>
                </Tree>
                <HScroll>
                  <Slot $ml={5}><Chevron dir="left" /></Slot>
                  <Slot $ml={5}><Thumb $w={39} $h={19} /></Slot>
                  <Push />
                  <Slot><Chevron dir="right" /></Slot>
                  <Slot $ml={5} />
                </HScroll>
              </Pane>

              <Pane $h={262}>
                <TabRow>
                  <Tab $w={79} $active $pl={4}>
                    <TableIcon />
                    <Text>属性</Text>
                    <Slot $ml={2}><CloseTabIcon /></Slot>
                  </Tab>
                  <Tab $w={58} $pl={5}>
                    <RecorderIcon />
                    <Text>结果</Text>
                  </Tab>
                  <TabTools>
                    <Slot><MinIcon /></Slot>
                    <Slot $ml={12}><MaxIcon /></Slot>
                  </TabTools>
                </TabRow>
                <PropTools>
                  <ToggleButton><TreeIcon /></ToggleButton>
                  <Slot $ml={3}><FilterIcon /></Slot>
                  <Slot $ml={8}><TableIcon dim /></Slot>
                  <Slot $ml={6}><PinIcon /></Slot>
                  <Slot $ml={16} $up={6}><MenuTriangle /></Slot>
                </PropTools>
                <PropTable>
                  <PropCell $head>属性</PropCell>
                  <PropCell $head>值</PropCell>
                  <PropCell $head $last />
                  {Array.from({ length: 24 }, (_, i) => <PropCell key={i} $last={i % 3 === 2} />)}
                </PropTable>
              </Pane>
            </Column>

            <Column $w={1075}>
              <Pane $h={561}>
                <TabRow>
                  <Tab $w={509} $active $pl={3}>
                    <LiveChartIcon />
                    <Latin $ls={-0.06}>[11.0.7] org.jetbrains.jps.cmdline.Launcher G:/IntelliJ IDEA 201...</Latin>
                    <Slot $ml={2}><CloseTabIcon /></Slot>
                  </Tab>
                  <Tab $w={510} $pl={5}>
                    <RecorderIcon />
                    <Latin>flight_recording_1107orgjetbrainsjpscmdlineLauncherGIntelli...</Latin>
                  </Tab>
                  <TabTools>
                    <Slot><MinIcon /></Slot>
                    <Slot $ml={12}><MaxIcon /></Slot>
                  </TabTools>
                </TabRow>
                <FormHeader>
                  <Slot $up={-6}><FormIcon /></Slot>
                  <FormTitle>概览</FormTitle>
                  <Push />
                  <Slot $up={-10}><PlusIcon /></Slot>
                  <Slot $ml={8} $up={-10}><BackIcon /></Slot>
                </FormHeader>
                <FormBody>
                  <Section $h={24}>
                    <SectionBar title="JMX 数据持久性设置" pr={5} size={15.5}>
                      <PlusIcon /><Slot $ml={1}><ChartTrashIcon /></Slot>
                    </SectionBar>
                  </Section>
                  <Section $h={196}>
                    <SectionBar title="面板" open pr={6}>
                      <PlusIcon /><RefreshIcon /><AccessIcon />
                    </SectionBar>
                    <GaugeRow>
                      <GaugeCell>
                        <GaugeTitle>Used Java Heap Memory</GaugeTitle>
                        <Gauge id="heap" unit="MiB" boldUnit
                          stops={[[0, '#387a78'], [0.5, '#37736f'], [1, '#146a6e']]}
                          needle="M14 307L52.700 265.300L53.500 266L15.500 308.500z"
                          shadow="M16.500 307.500L56.500 270L57.300 271L18 309z" />
                        <GaugeValue $dx={-12}><span>当前: 78.2 MiB</span><span>最大: 81 MiB</span></GaugeValue>
                      </GaugeCell>
                      <GaugeCell>
                        <GaugeTitle $ls={0.15}>JVM CPU Usage</GaugeTitle>
                        <Gauge id="cpu" unit="%"
                          stops={[[0, '#2b971e'], [0.1, '#35901f'], [0.5, '#7e6a20'], [0.85, '#b5301a'], [0.95, '#c21010'], [1, '#c30b0b']]}
                          needle="M-75.300 313.200L-18.500 317.300V321L-75.300 314z"
                          shadow="M-54.300 267L-12.500 306.500L-15.200 308.500z" />
                        <GaugeValue $dx={22}><span>当前: 0 %</span><span>最大: 20.8 %</span></GaugeValue>
                      </GaugeCell>
                      <GaugeCell>
                        <GaugeTitle $ls={-0.12}>Live Set + Fragmentation</GaugeTitle>
                        <Gauge id="live" unit="%"
                          stops={[[0, '#2b971e'], [0.78, '#2f9a1e'], [0.89, '#5f7a1c'], [0.96, '#b03018'], [1, '#c30b0b']]}
                          needle="M-58.500 273.200L-13.700 307.300L-15.500 309.500L-59 273.800z" />
                        <GaugeValue $dx={1}><span>当前: 17.3 %</span><span>最大: 17.3 %</span></GaugeValue>
                      </GaugeCell>
                    </GaugeRow>
                  </Section>
                  <Section $h={107}>
                    <SectionBar title="处理器" open pr={8}>
                      <PlusIcon /><RefreshIcon /><AccessIcon />
                    </SectionBar>
                    <ChartRow>
                      <CpuChart />
                      <Legend>
                        <LegendItems>
                          <LegendRow checked color="#987466" label="JVM CPU Usage" ls={0.1} />
                          <LegendRow checked color="#02003c" label="Machine CPU Usage" ls={-0.04} />
                        </LegendItems>
                      </Legend>
                    </ChartRow>
                  </Section>
                  <Section $h={108}>
                    <SectionBar title="内存" open pr={8}>
                      <PlusIcon /><RefreshIcon /><AccessIcon />
                    </SectionBar>
                    <ChartRow>
                      <MemChart />
                      <Legend>
                        <LegendItems>
                          <LegendRow color="#93412f" label="Committed Java Heap" ls={0.1} />
                          <LegendRow color="#575a48" label="Maximum Java Heap" />
                        </LegendItems>
                        <VBar><Chevron dir="up" /><Chevron dir="down" /></VBar>
                        <HBar>
                          <Slot $ml={5}><Chevron dir="left" /></Slot>
                          <Slot $ml={5}><Thumb $w={156} $h={19} /></Slot>
                          <Slot $ml={17}><Chevron dir="right" /></Slot>
                        </HBar>
                      </Legend>
                    </ChartRow>
                  </Section>
                </FormBody>
                <PageTabs>
                  <PageTab $w={60} $active $pl={8} $gap={5}><FormIcon /><Text>概览</Text></PageTab>
                  <PageTab $w={127} $pl={4}><BeanIcon /><Text $ls={0.05}>MBean 浏览器</Text></PageTab>
                  <PageTab $w={73} $pl={6} $gap={5}><WarnIcon /><Text>触发器</Text></PageTab>
                  <PageTab $w={58} $pl={4}><GearsIcon /><Text>系统</Text></PageTab>
                  <PageTab $w={58} $pl={4}><MemoryIcon /><Text>内存</Text></PageTab>
                  <PageTab $w={58} $pl={4} $gap={5}><RunGearIcon /><Text>线程</Text></PageTab>
                  <PageTab $w={88} $pl={4}><DiagIcon /><Text>诊断命令</Text></PageTab>
                  <PageTabRest />
                </PageTabs>
              </Pane>

              <Pane $h={187}>
                <TabRow>
                  <Tab $w={87} $active $pl={5} $gap={6}><LinesIcon /><Text>堆栈跟踪</Text></Tab>
                  <TabTools>
                    <BranchIcon kind="new" />
                    <Slot $ml={8}><BranchIcon kind="left" /></Slot>
                    <Slot $ml={12}><BranchIcon kind="right" /></Slot>
                    <Divider $ml={6} />
                    <Slot $ml={9}><TreeIcon /></Slot>
                    <Divider $ml={7} />
                    <Slot $ml={5}><ToggleButton><MethodIcon /></ToggleButton></Slot>
                    <Slot $ml={4}><RunGearIcon /></Slot>
                    <Slot $ml={16} $up={5}><MenuTriangle /></Slot>
                    <Slot $ml={10}><MinIcon /></Slot>
                    <Slot $ml={12}><MaxIcon /></Slot>
                  </TabTools>
                </TabRow>
                <StackTable>
                  <StackGrid $head>
                    <StackCell $head>堆栈跟踪</StackCell>
                    <StackCell $head $right>计数</StackCell>
                    <StackCell $head $last />
                  </StackGrid>
                  {Array.from({ length: 6 }, (_, i) => (
                    <StackGrid key={i}>
                      <StackCell />
                      <StackCell />
                      <StackCell $last />
                    </StackGrid>
                  ))}
                </StackTable>
              </Pane>
            </Column>
          </Workbench>
          <StatusBar><Grip /></StatusBar>
        </Window>
        <RightSliver $w={5} />
      </Desktop>
    </>
  );
}
